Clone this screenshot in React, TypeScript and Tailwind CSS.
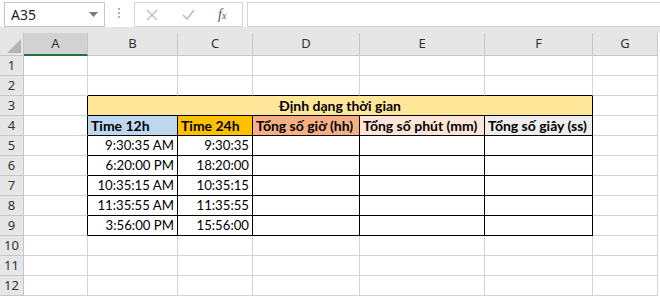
import React from 'react';

const cols = ['A', 'B', 'C', 'D', 'E', 'F', 'G'];

const headers = [
  { text: 'Time 12h', bg: 'bg-[#bdd7ee]' },
  { text: 'Time 24h', bg: 'bg-[#ffc000]' },
  { text: 'Tổng số giờ (hh)', bg: 'bg-[#f4b084]' },
  { text: 'Tổng số phút (mm)', bg: 'bg-[#fce4d6]' },
  { text: 'Tổng số giây (ss)', bg: 'bg-[#ededed]' },
];

const times = [
  ['9:30:35 AM', '9:30:35'],
  ['6:20:00 PM', '18:20:00'],
  ['10:35:15 AM', '10:35:15'],
  ['11:35:55 AM', '11:35:55'],
  ['3:56:00 PM', '15:56:00'],
];

const rows = Array.from({ length: 12 }, (_, i) => i + 1);

const cellFont = { fontFamily: 'Lato, "Noto Sans", sans-serif' };

function Cell({ r, c }: { r: number; c: number }) {
  const inRows = r >= 3 && r <= 9;
  const rightBlack = inRows && c <= 5;
  const bottomBlack = c >= 1 && c <= 5 && r >= 2 && r <= 9;
  let bg = 'bg-white';
  let content: React.ReactNode = null;
  let align = 'justify-end';
  if (r === 4 && c >= 1 && c <= 5) {
    bg = headers[c - 1].bg;
    content = <span className="font-bold text-[14px]">{headers[c - 1].text}</span>;
    align = 'justify-start';
  } else if (r >= 5 && r <= 9 && (c === 1 || c === 2)) {
    content = times[r - 5][c - 1];
  }
  return (
    <div
      className={`h-[20px] border-r border-b flex items-end overflow-visible whitespace-nowrap px-[3px] text-[13.2px] leading-[19px] text-black ${align} ${bg} ${
        rightBlack ? 'border-r-black' : 'border-r-[#d4d4d4]'
      } ${bottomBlack ? 'border-b-black' : 'border-b-[#d4d4d4]'}`}
      style={cellFont}
    >
      {content}
    </div>
  );
}

export default function App() {
  return (
    <div className="w-[660px] h-[299px] overflow-hidden bg-white relative" style={{ fontFamily: '"Noto Sans", sans-serif' }}>
      {/* formula bar */}
      <div className="h-[27px] flex items-start bg-white">
        <div className="ml-[4px] mt-[2px] w-[101px] h-[25px] border border-[#c6c6c6] bg-white flex items-center justify-between pl-[6px] pr-[6px] text-[14px] text-[#222]">
          <span>A35</span>
          <svg width="9" height="5" viewBox="0 0 9 5"><path d="M0 0h9L4.5 5z" fill="#7a7a7a" /></svg>
        </div>
        <div className="ml-[13px] mt-[8px] flex flex-col gap-[2px]">
          <div className="w-[2px] h-[2px] bg-[#b0b0b0]" />
          <div className="w-[2px] h-[2px] bg-[#b0b0b0]" />
          <div className="w-[2px] h-[2px] bg-[#b0b0b0]" />
        </div>
        <div className="ml-[14px] mt-[2px] w-[109px] h-[25px] border border-[#d4d4d4] bg-white flex items-center">
          <svg className="ml-[11px]" width="12" height="12" viewBox="0 0 12 12">
            <path d="M1 1l10 10M11 1L1 11" stroke="#bdbdbd" strokeWidth="1.4" />
          </svg>
          <svg className="ml-[24px]" width="13" height="11" viewBox="0 0 13 11">
            <path d="M1 6l4 4L12 1" stroke="#bdbdbd" strokeWidth="1.6" fill="none" />
          </svg>
          <span className="ml-[23px] text-[14px] italic text-[#555]" style={{ fontFamily: '"Liberation Serif", serif' }}>
            f<span className="text-[10px]">x</span>
          </span>
        </div>
        <div className="ml-[4px] mt-[2px] flex-1 h-[25px] border border-[#d4d4d4] border-r-0 bg-white" />
      </div>
      <div className="h-[6px] bg-[#e6e6e6]" />

      {/* sheet grid */}
      <div className="grid grid-cols-[24px_64px_90px_75px_107px_125px_108px_65px]">
        {/* corner */}
        <div className="h-[23px] bg-[#e6e6e6] border-r border-b border-[#c6c6c6] flex items-end justify-end p-[2px]">
          <svg width="14" height="14" viewBox="0 0 14 14"><path d="M14 0V14H0z" fill="#b4b4b4" /></svg>
        </div>
        {cols.map((c, i) => (
          <div
            key={c}
            className={`h-[23px] border-r border-[#c6c6c6] flex items-center justify-center text-[13px] text-[#333] ${
              i === 0 ? 'bg-[#d2d2d2] border-b-2 border-b-[#217346]' : 'bg-[#e6e6e6] border-b'
            }`}
          >
            {c}
          </div>
        ))}

        {rows.map((r) => (
          <React.Fragment key={r}>
            <div className="h-[20px] bg-[#e6e6e6] border-r border-b border-[#c6c6c6] flex items-center justify-center text-[13px] text-[#333]">
              {r}
            </div>
            {r === 3 ? (
              <>
                <Cell r={r} c={0} />
                <div
                  className="col-span-5 h-[20px] bg-[#ffe699] border-r border-b border-black flex items-end justify-center font-bold text-[14px] leading-[19px]"
                  style={cellFont}
                >
                  Định dạng thời gian
                </div>
                <Cell r={r} c={6} />
              </>
            ) : (
              cols.map((_, c) => <Cell key={c} r={r} c={c} />)
            )}
          </React.Fragment>
        ))}
      </div>
    </div>
  );
}
